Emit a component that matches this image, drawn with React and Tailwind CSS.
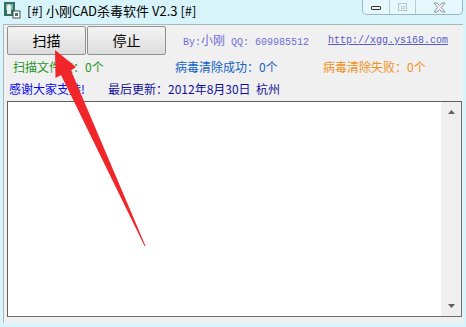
import React from "react";

const cjk = { fontFamily: '"Noto Sans CJK SC", "Liberation Sans", sans-serif' };
const mono = { fontFamily: '"Liberation Mono", "Noto Sans CJK SC", monospace' };

function WinIcon() {
  return (
    <svg width="17" height="17" viewBox="0 0 17 17">
      <rect x="0" y="0" width="11" height="14" fill="#2f6f62" />
      <rect x="2" y="2" width="7" height="6" fill="#7fb8a8" />
      <path d="M3 4 L5 2 L7 4 L7 12 L3 12 Z" fill="#e8f0ee" />
      <rect x="9" y="9" width="7" height="7" fill="#ffffff" stroke="#4a4a4a" strokeWidth="1" />
      <rect x="11" y="11" width="3" height="3" fill="#3a7a6a" />
    </svg>
  );
}

function CaptionButtons() {
  return (
    <div className="flex h-[15px] mr-[3px] border border-t-0 border-[#9fb6c4] rounded-b-[5px] bg-[#e4f8fd] overflow-hidden">
      <div className="w-[27px] flex items-center justify-center border-r border-[#b9ccd6]">
        <div className="w-[10px] h-[4px] border border-[#333] rounded-[1px] bg-[#f4f4f4] mt-[2px]" />
      </div>
      <div className="w-[26px] flex items-center justify-center border-r border-[#b9ccd6]">
        <div className="w-[9px] h-[8px] border border-[#b8c4cc] flex items-center justify-center">
          <div className="w-[4px] h-[3px] border border-[#c4ccd2]" />
        </div>
      </div>
      <div className="w-[46px] flex items-center justify-center">
        <svg width="13" height="11" viewBox="0 0 13 11">
          <path d="M1 1 L4 1 L6.5 3.5 L9 1 L12 1 L8.3 5.5 L12 10 L9 10 L6.5 7.5 L4 10 L1 10 L4.7 5.5 Z" fill="#f3f6f7" stroke="#8c9498" strokeWidth="1" strokeLinejoin="round" />
        </svg>
      </div>
    </div>
  );
}

function Btn({ children }) {
  return (
    <div
      className="w-[79px] h-[29px] flex items-center justify-center border border-[#8f8f8f] rounded-[2px] bg-gradient-to-b from-[#f4f4f4] to-[#dcdcdc] text-[14px] text-black"
      style={cjk}
    >
      {children}
    </div>
  );
}

export default function App() {
  return (
    <div className="relative w-[466px] h-[327px] bg-[#d8f4fb] flex flex-col overflow-hidden">
      {/* Title bar */}
      <div className="h-[24px] flex items-start justify-between shrink-0">
        <div className="flex items-center h-[20px] pl-[4px] gap-[6px]">
          <WinIcon />
          <span className="text-[13px] text-black leading-none" style={cjk}>
            [#] 小刚CAD杀毒软件 V2.3 [#]
          </span>
        </div>
        <CaptionButtons />
      </div>

      {/* Client area */}
      <div className="mx-[3px] mb-[4px] flex-1 bg-[#f0f0f0] border-l border-t border-[#a8b8be] flex flex-col pl-[3px]">
        <div className="flex items-center h-[31px]">
          <Btn>扫描</Btn>
          <div className="w-[1px]" />
          <Btn>停止</Btn>
          <div className="ml-[17px] flex items-baseline text-[#6e6ed8]">
            <span className="text-[10px]" style={mono}>By:</span>
            <span className="text-[12px]" style={cjk}>小刚</span>
            <span className="text-[10px] whitespace-pre" style={mono}> QQ: 609985512</span>
          </div>
          <span className="ml-[19px] text-[10px] text-[#5a5ac8] underline" style={mono}>
            http://xgg.ys168.com
          </span>
        </div>

        <div className="flex items-center h-[22px] text-[12px]" style={cjk}>
          <span className="ml-[6px] w-[162px] text-[#1f951f]">扫描文件数：0个</span>
          <span className="w-[148px] text-[#1262c4]">病毒清除成功：0个</span>
          <span className="text-[#f0901c]">病毒清除失败：0个</span>
        </div>

        <div className="flex items-center h-[22px] text-[12px] whitespace-pre" style={cjk}>
          <span className="ml-[2px] w-[99px] text-[#0a0af0]">感谢大家支持!</span>
          <span className="text-[#10109a]">最后更新：2012年8月30日  杭州</span>
        </div>

        <div className="mt-[1px] h-[216px] mr-[1px] bg-white border border-t-[#5e5e5e] border-l-[#5e5e5e] border-r-[#6e6e6e] border-b-[#6e6e6e] flex justify-end">
          <div className="w-[20px] h-full bg-[#efefef] flex flex-col items-center justify-between py-[8px]">
            <svg width="7" height="4" viewBox="0 0 7 4"><path d="M0 4 L3.5 0 L7 4 Z" fill="#606060" /></svg>
            <svg width="7" height="4" viewBox="0 0 7 4"><path d="M0 0 L7 0 L3.5 4 Z" fill="#606060" /></svg>
          </div>
        </div>
      </div>

      {/* Red annotation arrow */}
      <svg className="absolute left-0 top-0 pointer-events-none" width="466" height="327" viewBox="0 0 466 327">
        <polygon
          points="55,50 76,67 71,70.5 145.5,246 144.5,246 61,75 55.5,78"
          fill="#f0262a"
        />
      </svg>
    </div>
  );
}
